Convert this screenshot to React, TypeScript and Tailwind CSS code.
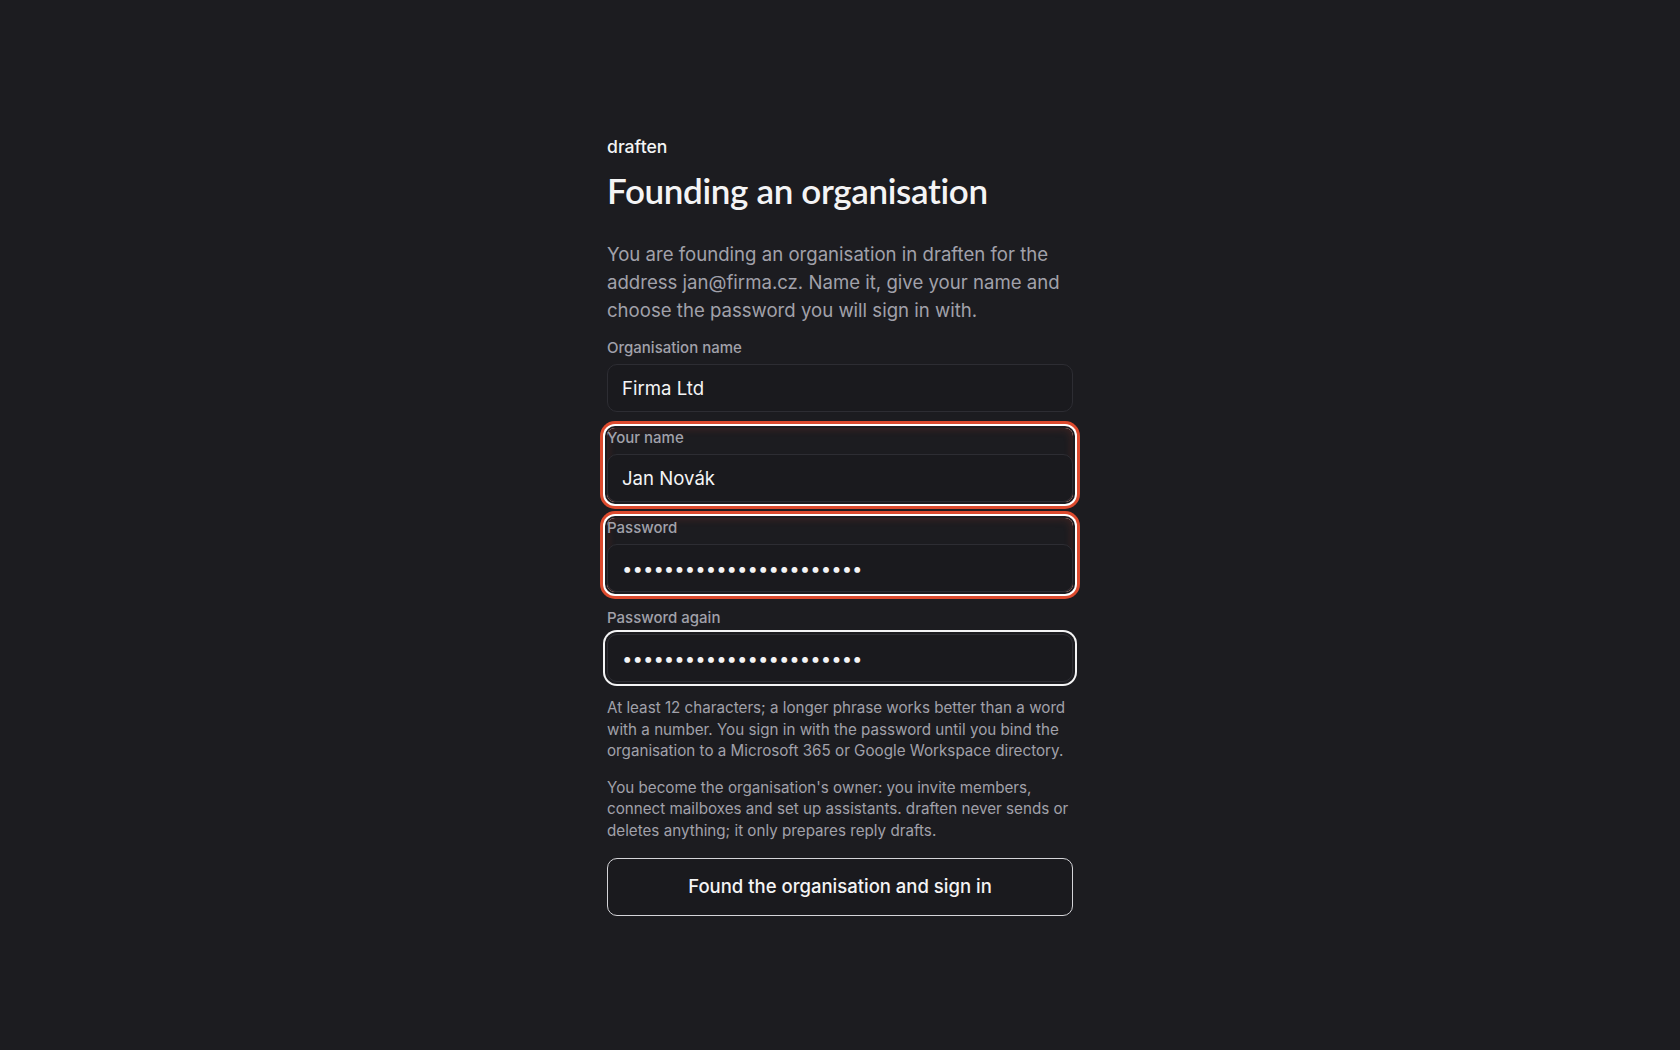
import { useState } from 'react';

const fieldBase =
    'h-12 w-full rounded-[10px] border border-[#2d2d33] bg-[#1a1a1e] px-3.5 text-[18.6px] text-[#f4f4f5] outline-none';

const invalidGroup =
    'rounded-lg shadow-[0_0_0_2px_#1c1c20,0_0_0_4px_#ffffff,0_0_0_7px_#dc4a2e,inset_0_0_10px_rgba(220,74,46,0.22)]';

function Field({
    label,
    type = 'text',
    value,
    invalid = false,
    focused = false,
}: {
    label: string;
    type?: string;
    value: string;
    invalid?: boolean;
    focused?: boolean;
}) {
    const [val, setVal] = useState(value);

    return (
        <div className={invalid ? invalidGroup : ''}>
            <label className="block text-[15px] font-medium leading-5 text-[#a1a1aa] mb-1.5">{label}</label>
            <input
                type={type}
                value={val}
                onChange={(e) => setVal(e.target.value)}
                className={fieldBase + (focused ? ' shadow-[0_0_0_2px_#1c1c20,0_0_0_4px_#f4f4f5]' : '')}
            />
        </div>
    );
}

export default function App() {
    return (
        <div className="min-h-screen w-full bg-[#1c1c20] flex items-center justify-center font-['Inter',sans-serif]">
            <div className="w-[466px] mt-px">
                {/* Brand */}
                <div className="text-[17.6px] font-medium leading-6 text-[#f4f4f5]">draften</div>
                <h1 className="mt-[11px] font-['Lato',sans-serif] text-[35px] font-semibold leading-10 tracking-[-0.01em] text-[#f4f4f5]">
                    Founding an organisation
                </h1>

                <p className="mt-[30px] text-[18.6px] leading-7 text-[#a1a1aa]">
                    You are founding an organisation in draften for the address jan@firma.cz. Name it, give
                    your name and choose the password you will sign in with.
                </p>

                {/* Form */}
                <form className="mt-[14px] flex flex-col gap-4" onSubmit={(e) => e.preventDefault()}>
                    <Field label="Organisation name" value="Firma Ltd" />
                    <Field label="Your name" value="Jan Novák" invalid />
                    <Field label="Password" type="password" value="correcthorsebatterystap" invalid />
                    <Field label="Password again" type="password" value="correcthorsebatterystap" focused />

                    <div className="-mt-px text-[15.2px] leading-[21.5px] text-[#a1a1aa]">
                        <p>
                            At least 12 characters; a longer phrase works better than a word with a number. You
                            sign in with the password until you bind the organisation to a Microsoft 365 or
                            Google Workspace directory.
                        </p>
                        <p className="mt-[15px]">
                            You become the organisation's owner: you invite members, connect mailboxes and set up
                            assistants. draften never sends or deletes anything; it only prepares reply drafts.
                        </p>
                    </div>

                    <button
                        type="submit"
                        className="mt-px h-[58px] w-full rounded-[10px] border border-[#d4d4d8] bg-[#1a1a1e] text-[18.5px] font-medium text-[#f4f4f5] hover:bg-[#232328] transition-colors"
                    >
                        Found the organisation and sign in
                    </button>
                </form>
            </div>
        </div>
    );
}
